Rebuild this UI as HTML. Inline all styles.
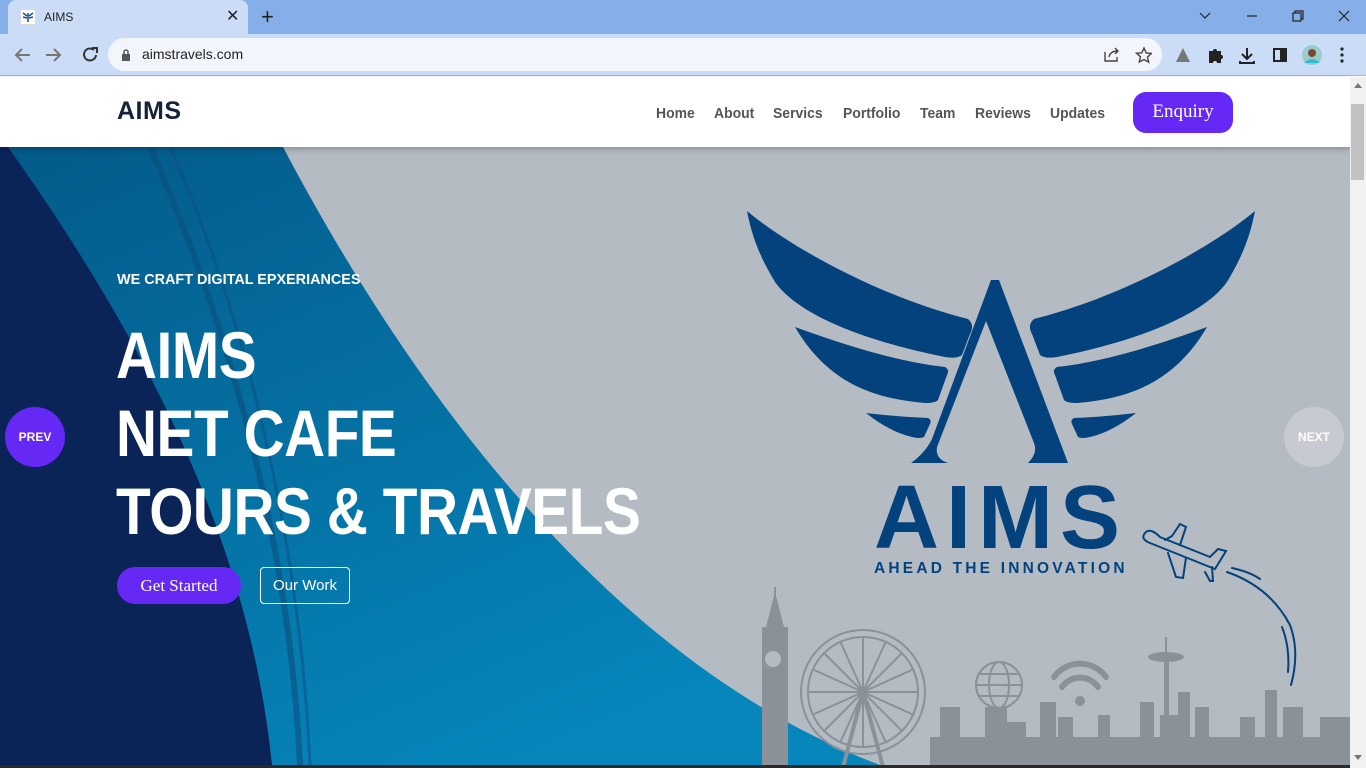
<!DOCTYPE html>
<html><head><meta charset="utf-8"><style>
*{margin:0;padding:0;box-sizing:border-box}
body{width:1366px;height:768px;overflow:hidden;font-family:"Liberation Sans",sans-serif;background:#fff;position:relative}
.tabbar{position:absolute;left:0;top:0;width:1366px;height:34px;background:#86aee8}
.tab{position:absolute;left:8px;top:0;width:240px;height:34px;background:#cbddf6;border-radius:8px 8px 0 0;font-size:12px;color:#222}
.toolbar{position:absolute;left:0;top:34px;width:1366px;height:42px;background:#cbddf6;border-bottom:1px solid #aab8cc}
.omni{position:absolute;left:108px;top:4px;width:1054px;height:33px;background:#f2f6fc;border-radius:17px}
.nav{position:absolute;left:0;top:77px;width:1350px;height:70px;background:#fff;box-shadow:0 2px 6px rgba(0,0,0,.25);z-index:3}
.nav a{position:absolute;top:28px;font-size:15px;font-weight:bold;color:#555;transform:scaleX(.93);transform-origin:left}
.scroll{position:absolute;left:1350px;top:77px;width:16px;height:691px;background:#f1f1f1;z-index:4}
.hero{position:absolute;left:0;top:147px;width:1350px;height:618px;overflow:hidden;background:#b5bbc3}
.w{color:#fff;position:absolute;font-weight:bold;transform-origin:left top}
</style></head><body>
<div class="tabbar">
 <div class="tab">
  <svg style="position:absolute;left:12px;top:9px" width="16" height="16"><rect width="16" height="16" fill="#fff" stroke="#bbb"/><path d="M3 4l4 3M13 4l-4 3M3 8l4 1M13 8l-4 1M8 4v9" stroke="#1a4f8c" stroke-width="1.5"/></svg>
  <span style="position:absolute;left:36px;top:10px">AIMS</span>
  <span style="position:absolute;left:218px;top:6px;font-size:16px">✕</span>
 </div>
 <span style="position:absolute;left:261px;top:4px;font-size:22px;color:#222">+</span>
 <svg style="position:absolute;left:1196px;top:10px" width="160" height="14" stroke="#222" fill="none" stroke-width="1.2"><path d="M4 3l5 5 5-5"/><path d="M51 6h10"/><rect x="97" y="3" width="8" height="8"/><path d="M99 3v-2h8v8h-2"/><path d="M143 1l10 10M153 1l-10 10"/></svg>
</div>
<div class="toolbar">
 <svg style="position:absolute;left:12px;top:11px" width="90" height="20" fill="none" stroke-width="2"><path d="M18 10H4M10 4l-6 6 6 6" stroke="#777"/><path d="M34 10h14M42 4l6 6-6 6" stroke="#777"/><path d="M82 5a6 6 0 1 0 2 5" stroke="#333"/><path d="M80 3h5v5" stroke="#333"/></svg>
 <div class="omni">
  <svg style="position:absolute;left:13px;top:11px" width="10" height="12"><rect x="1" y="5" width="8" height="7" fill="#555"/><path d="M3 5V3a2 2 0 0 1 4 0v2" stroke="#555" fill="none" stroke-width="1.5"/></svg>
  <span style="position:absolute;left:34px;top:8px;font-size:14px;color:#222">aimstravels.com</span>
  <svg style="position:absolute;left:994px;top:8px" width="50" height="18" fill="none" stroke="#444" stroke-width="1.4"><path d="M3 6v9h12v-4M7 11c1-5 5-6 9-6M13 2l3 3-3 3"/><path d="M42 2l2.2 5 5.3.4-4 3.6 1.2 5.2L42 13.5 37.3 16l1.2-5.2-4-3.6 5.3-.4z"/></svg>
 </div>
 <svg style="position:absolute;left:1174px;top:11px" width="180" height="22"><path d="M2 17L9 3l7 14z" fill="#777"/><path d="M35 6h4a2 2 0 0 1 4 0h4v4a2 2 0 0 1 0 4v4h-4a2 2 0 0 0-4 0h-4z" fill="#222"/><path d="M73 3v10M68 9l5 5 5-5M66 16v2h14v-2" stroke="#222" stroke-width="2" fill="none"/><rect x="100" y="4" width="12" height="12" fill="none" stroke="#222" stroke-width="2"/><rect x="106" y="4" width="6" height="12" fill="#222"/><circle cx="138" cy="10" r="10" fill="#9cc"/><circle cx="138" cy="8" r="4" fill="#7a4a30"/><path d="M130 18q8-8 16 0" fill="#3bc"/><circle cx="168" cy="4" r="1.6" fill="#222"/><circle cx="168" cy="10" r="1.6" fill="#222"/><circle cx="168" cy="16" r="1.6" fill="#222"/></svg>
</div>

<div class="nav">
 <div style="position:absolute;left:117px;top:20px;font-size:25px;font-weight:bold;color:#13233a;letter-spacing:.5px">AIMS</div>
 <a style="left:656px">Home</a><a style="left:714px">About</a><a style="left:773px">Servics</a><a style="left:843px">Portfolio</a><a style="left:920px">Team</a><a style="left:975px">Reviews</a><a style="left:1050px">Updates</a>
 <div style="position:absolute;left:1133px;top:15px;width:100px;height:41px;background:#6528f5;border-radius:13px;color:#fff;font-family:'Liberation Serif',serif;font-size:19px;text-align:center;line-height:40px">Enquiry</div>
</div>
<div class="scroll"><div style="position:absolute;left:1px;top:27px;width:13px;height:76px;background:#c1c1c1"></div><div style="position:absolute;left:4px;top:6px;border:4px solid transparent;border-bottom:5px solid #777;border-top:0"></div><div style="position:absolute;left:4px;top:678px;border:4px solid transparent;border-top:5px solid #777;border-bottom:0"></div></div>

<div class="hero">
 <svg width="1350" height="618" style="position:absolute;left:0;top:0">
  <defs><linearGradient id="bg" x1="0" y1="0" x2="0.6" y2="1"><stop offset="0" stop-color="#045a8a"/><stop offset="1" stop-color="#0686bb"/></linearGradient></defs>
  <path d="M0 0H283C420 260 620 520 880 618H0Z" fill="url(#bg)"/>
  <path d="M0 0H8C150 200 250 400 272 618H0Z" fill="#0a2458"/>
  <path d="M150 0C230 180 290 400 300 618" stroke="#0a4e7d" stroke-width="6" fill="none" opacity=".6"/>
  <path d="M170 0C250 180 300 400 310 618" stroke="#0a4e7d" stroke-width="3" fill="none" opacity=".5"/>
  <g fill="#8b9199">
   <rect x="762" y="480" width="26" height="140"/><path d="M766 480l9-35 9 35z"/><rect x="774" y="440" width="2" height="10"/>
   <circle cx="773" cy="512" r="8" fill="#b5bbc3"/>
   <rect x="930" y="590" width="420" height="30"/>
   <rect x="940" y="560" width="20" height="60"/><rect x="985" y="560" width="22" height="60"/><rect x="1006" y="575" width="20" height="45"/>
   <rect x="1040" y="555" width="16" height="65"/><rect x="1058" y="570" width="15" height="50"/><rect x="1098" y="568" width="12" height="52"/>
   <rect x="1140" y="555" width="14" height="65"/><rect x="1160" y="568" width="18" height="52"/><rect x="1178" y="545" width="12" height="75"/>
   <rect x="1195" y="560" width="14" height="60"/><rect x="1240" y="570" width="15" height="50"/><rect x="1265" y="543" width="12" height="77"/>
   <rect x="1283" y="560" width="20" height="60"/><rect x="1320" y="570" width="30" height="50"/>
   <rect x="1164" y="510" width="5" height="110"/><ellipse cx="1166" cy="510" rx="18" ry="5"/><path d="M1165 490h2v20h-2z"/>
  </g>
  <g fill="none" stroke="#8b9199" stroke-width="2">
   <circle cx="863" cy="545" r="62"/><circle cx="863" cy="545" r="55"/>
   <path d="M808 545h110M863 490v110M824 506l78 78M902 506l-78 78M812 522l102 46M812 568l102-46M840 494l46 102M886 494l-46 102"/>
   <path d="M863 545l-20 75M863 545l20 75" stroke-width="4"/>
   <circle cx="999" cy="538" r="23"/><ellipse cx="999" cy="538" rx="10" ry="23"/><path d="M976 538h46M979 527h40M979 549h40"/>
   <path d="M1054 530a32 32 0 0 1 52 0M1062 540a22 22 0 0 1 36 0" stroke-width="6" stroke-linecap="round"/>
  </g>
  <circle cx="1080" cy="554" r="5" fill="#8b9199"/>
  <g fill="#04427e">
   <path d="M747 64C790 100 880 150 968 172Q975 178 970 187L962 208Q957 212 945 210C870 195 800 170 775 135C760 110 752 90 747 64Z"/>
   <path d="M795 180C850 200 900 215 945 220Q950 223 947 228L938 253Q935 256 925 256C880 252 830 240 795 180Z"/>
   <path d="M866 266Q900 270 928 271Q932 273 930 277L924 290Q920 292 912 290Q890 285 866 266Z"/>
   <g transform="translate(2002 0) scale(-1 1)">
    <path d="M747 64C790 100 880 150 968 172Q975 178 970 187L962 208Q957 212 945 210C870 195 800 170 775 135C760 110 752 90 747 64Z"/>
    <path d="M795 180C850 200 900 215 945 220Q950 223 947 228L938 253Q935 256 925 256C880 252 830 240 795 180Z"/>
    <path d="M866 266Q900 270 928 271Q932 273 930 277L924 290Q920 292 912 290Q890 285 866 266Z"/>
   </g>
   <path d="M991 133L999 133L1068 316L1028 316Q1038 306 1034 296L986 174L937 300Q935 312 948 316L911 316Q925 306 932 292Z"/>
  </g>
  <text x="874" y="401" font-family="Liberation Sans" font-weight="bold" font-size="90" fill="#04427e" letter-spacing="7">AIMS</text>
  <text x="874" y="426" font-family="Liberation Sans" font-weight="bold" font-size="15.5" fill="#04427e" letter-spacing="3.2">AHEAD THE INNOVATION</text>
  <g fill="none" stroke="#04427e" stroke-width="2" stroke-linecap="round">
   <path d="M1145 386Q1140 392 1150 396L1215 422L1226 404L1218 402L1210 410L1160 390Q1150 380 1145 386Z"/>
   <path d="M1165 393L1172 389L1180 377L1186 380L1180 398M1168 406L1176 430L1183 431L1186 411M1205 425L1210 434L1213 434L1212 420"/>
   <path d="M1227 425Q1270 440 1290 478Q1300 505 1291 538M1232 421Q1250 425 1260 432M1285 469L1288 475M1282 480Q1290 500 1288 525"/>
  </g>
 </svg>
 <div class="w" style="left:117px;top:124px;font-size:15px;transform:scaleX(.96)">WE CRAFT DIGITAL EPXERIANCES</div>
 <div class="w" style="left:116px;top:169px;font-size:66px;line-height:78px;letter-spacing:-.5px;transform:scaleX(.86)">AIMS<br>NET CAFE<br>TOURS &amp; TRAVELS</div>
 <div style="position:absolute;left:117px;top:420px;width:124px;height:37px;background:#6528f5;border-radius:18px;color:#fff;font-family:'Liberation Serif',serif;font-size:17px;text-align:center;line-height:37px">Get Started</div>
 <div style="position:absolute;left:260px;top:420px;width:90px;height:37px;border:1px solid #fff;border-radius:4px;color:#fff;font-size:15px;text-align:center;line-height:35px">Our Work</div>
 <div style="position:absolute;left:5px;top:260px;width:60px;height:60px;border-radius:50%;background:#6528f5;color:#fff;font-size:12px;font-weight:bold;text-align:center;line-height:60px">PREV</div>
 <div style="position:absolute;left:1284px;top:260px;width:60px;height:60px;border-radius:50%;background:#c7cbd1;color:#fff;font-size:12px;font-weight:bold;text-align:center;line-height:60px">NEXT</div>
</div>
<div style="position:absolute;left:0;top:765px;width:1366px;height:3px;background:#2a2a2a"></div>
</body></html>
